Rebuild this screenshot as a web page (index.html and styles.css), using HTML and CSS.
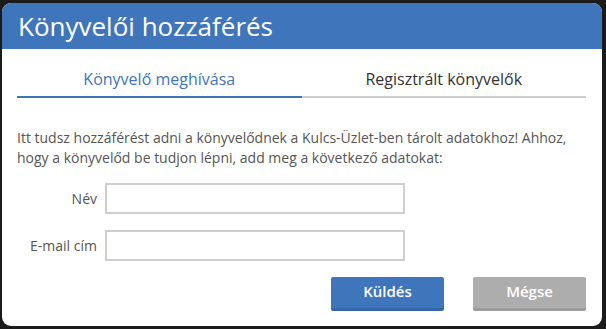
FILE: index.html
```html
<!DOCTYPE html>
<html lang="hu">
<head>
<meta charset="utf-8">
<title>Könyvelői hozzáférés</title>
<link rel="stylesheet" href="styles.css">
</head>
<body>
<div class="modal">
  <div class="modal-header">
    <h1 class="modal-title">Könyvelői hozzáférés</h1>
  </div>
  <div class="modal-body">
    <div class="tabs">
      <div class="tab tab-active">Könyvelő meghívása</div>
      <div class="tab">Regisztrált könyvelők</div>
    </div>
    <p class="intro">Itt tudsz hozzáférést adni a könyvelődnek a Kulcs-Üzlet-ben tárolt adatokhoz! Ahhoz, hogy a könyvelőd be tudjon lépni, add meg a következő adatokat:</p>
    <div class="form">
      <label class="form-label" for="nev">Név</label>
      <input class="form-input" id="nev" type="text">
      <label class="form-label" for="email">E-mail cím</label>
      <input class="form-input" id="email" type="text">
    </div>
    <div class="actions">
      <button class="btn btn-primary" type="button">Küldés</button>
      <button class="btn btn-secondary" type="button">Mégse</button>
    </div>
  </div>
</div>
</body>
</html>
```

FILE: styles.css
```css
html, body {
  margin: 0;
  padding: 0;
}
body {
  background: #1b1b1b;
  font-family: "Open Sans", "Noto Sans", sans-serif;
  width: 606px;
  height: 329px;
  overflow: hidden;
}
.modal {
  margin: 3px 0 0 2px;
  width: 600px;
  height: 323px;
  background: #fff;
  border-radius: 9px;
  overflow: hidden;
}
.modal-header {
  background: #3f75ba;
  height: 46px;
  display: flex;
  align-items: center;
  padding-left: 16px;
}
.modal-title {
  margin: 0;
  color: #fff;
  font-size: 26px;
  font-weight: 400;
  line-height: 30px;
}
.modal-body {
  padding: 0 16px 0 15px;
}
.tabs {
  display: flex;
  margin-top: 13px;
}
.tab {
  flex: 1;
  text-align: center;
  font-size: 16px;
  line-height: 22px;
  padding: 6px 0;
  color: #333;
  border-bottom: 2px solid #cfcfcf;
}
.tab-active {
  color: #3f75ba;
  border-bottom-color: #3f75ba;
}
.intro {
  margin: 30px 0 0;
  font-size: 14px;
  line-height: 20px;
  color: #555;
}
.form {
  display: grid;
  grid-template-columns: 80px 300px;
  column-gap: 8px;
  row-gap: 16px;
  align-items: center;
  margin-top: 15px;
}
.form-label {
  text-align: right;
  font-size: 14px;
  color: #555;
}
.form-input {
  box-sizing: border-box;
  height: 31px;
  width: 300px;
  border: 2px solid #cfcfcf;
  border-radius: 0;
  margin: 0;
  padding: 0 6px;
  font-family: inherit;
  font-size: 14px;
}
.actions {
  display: flex;
  justify-content: flex-end;
  gap: 29px;
  margin-top: 16px;
  padding-right: 0;
}
.btn {
  box-sizing: border-box;
  width: 113px;
  height: 34px;
  border: none;
  border-radius: 2px;
  color: #fff;
  font-family: inherit;
  font-size: 15px;
  font-weight: 600;
  padding: 0 0 3px;
}
.btn-primary {
  background: #3f75ba;
  border-bottom: 3px solid #3567a8;
}
.btn-secondary {
  background: #adadad;
  border-bottom: 3px solid #9c9c9c;
}
```
